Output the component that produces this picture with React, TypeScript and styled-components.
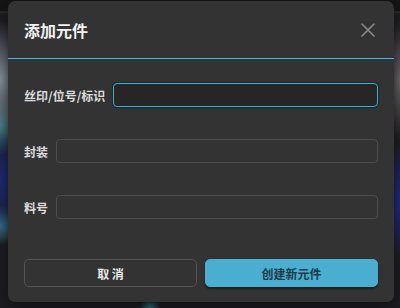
import React from "react";
import styled, { createGlobalStyle } from "styled-components";

const GlobalStyle = createGlobalStyle`
  html, body { margin: 0; padding: 0; }
  body {
    width: 400px;
    height: 308px;
    overflow: hidden;
    font-family: "Noto Sans CJK SC", "Noto Sans", sans-serif;
  }
`;

const Backdrop = styled.div`
  width: 400px;
  height: 308px;
  box-sizing: border-box;
  padding: 1px 6px 6px 8px;
  background:
    linear-gradient(180deg, #151515 0px, #151515 11px, #3a3a40 12px, transparent 13px),
    radial-gradient(ellipse 30px 60px at 0px 80px, #8a95a0, transparent),
    radial-gradient(ellipse 20px 30px at 0px 125px, #3b7f8a, transparent),
    radial-gradient(ellipse 30px 60px at 0px 180px, #1d2c78, transparent),
    radial-gradient(ellipse 20px 20px at 0px 225px, #3d8794, transparent),
    radial-gradient(ellipse 20px 60px at 400px 80px, #6e6870, transparent),
    radial-gradient(ellipse 20px 60px at 400px 200px, #1e2a8a, transparent),
    radial-gradient(ellipse 10px 10px at 150px 308px, #2d6e78, transparent),
    #1e1d22;
`;

const Dialog = styled.div`
  width: 386px;
  height: 301px;
  background: #333333;
  border-radius: 7px;
  display: flex;
  flex-direction: column;
  box-shadow: 0 4px 16px rgba(0, 0, 0, 0.5);
`;

const Header = styled.div`
  height: 57px;
  display: flex;
  align-items: center;
  justify-content: space-between;
  padding: 0 16px;
  border-bottom: 1px solid #3cb9dc;
`;

const Title = styled.h2`
  margin: 0;
  font-size: 16px;
  font-weight: 700;
  color: #f2f2f2;
`;

const CloseButton = styled.button`
  width: 20px;
  height: 20px;
  padding: 0;
  border: none;
  background: transparent;
  display: flex;
  align-items: center;
  justify-content: center;
  cursor: pointer;
`;

const Body = styled.div`
  flex: 1;
  display: flex;
  flex-direction: column;
  padding: 24px 16px 15px;
`;

const Fields = styled.div`
  display: flex;
  flex-direction: column;
  gap: 32px;
`;

const Row = styled.div`
  display: flex;
  align-items: center;
  gap: 8px;
`;

const Label = styled.label`
  font-size: 12px;
  font-weight: 700;
  color: #dcdcdc;
  white-space: nowrap;
`;

const Input = styled.input<{ $focused?: boolean }>`
  flex: 1;
  height: 24px;
  box-sizing: border-box;
  border-radius: 4px;
  background: ${(p) => (p.$focused ? "#262626" : "#333333")};
  border: 1px solid ${(p) => (p.$focused ? "#3cb2d4" : "#4e4e4e")};
  box-shadow: ${(p) => (p.$focused ? "0 0 0 1px #15262c" : "none")};
  outline: none;
  color: #eee;
  padding: 0 8px;
  font-size: 13px;
`;

const Actions = styled.div`
  margin-top: auto;
  display: flex;
  gap: 8px;
`;

const Button = styled.button<{ $primary?: boolean }>`
  flex: 1;
  height: 28px;
  box-sizing: border-box;
  border-radius: 5px;
  font-family: inherit;
  font-size: 12px;
  font-weight: 700;
  cursor: pointer;
  border: 1px solid ${(p) => (p.$primary ? "#4aaed0" : "#555555")};
  background: ${(p) => (p.$primary ? "#4aaed0" : "transparent")};
  color: ${(p) => (p.$primary ? "#1f3b47" : "#e8e8e8")};
  box-shadow: ${(p) => (p.$primary ? "0 2px 2px rgba(0,0,0,0.4)" : "none")};
`;

export default function App() {
  return (
    <>
      <GlobalStyle />
      <Backdrop>
        <Dialog>
          <Header>
            <Title>添加元件</Title>
            <CloseButton aria-label="close">
              <svg width="14" height="14" viewBox="0 0 14 14">
                <path d="M1 1L13 13M13 1L1 13" stroke="#8a8a8a" strokeWidth="1.6" strokeLinecap="round" />
              </svg>
            </CloseButton>
          </Header>
          <Body>
            <Fields>
              <Row>
                <Label>丝印/位号/标识</Label>
                <Input $focused />
              </Row>
              <Row>
                <Label>封装</Label>
                <Input />
              </Row>
              <Row>
                <Label>料号</Label>
                <Input />
              </Row>
            </Fields>
            <Actions>
              <Button>取 消</Button>
              <Button $primary>创建新元件</Button>
            </Actions>
          </Body>
        </Dialog>
      </Backdrop>
    </>
  );
}
